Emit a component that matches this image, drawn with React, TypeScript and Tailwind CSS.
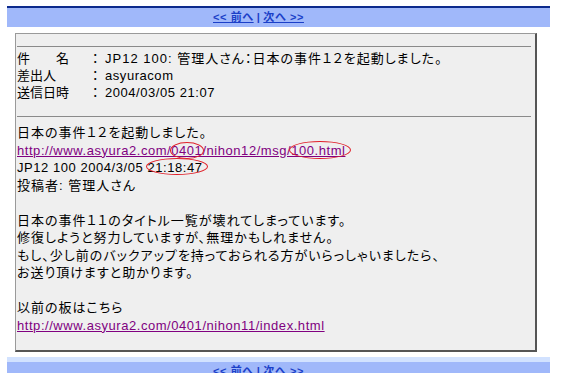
import React from 'react';

const jp = "font-['Liberation_Sans','Noto_Sans_CJK_JP',sans-serif]";

function NavBar({ clip = false }: { clip?: boolean }) {
  return (
    <div
      className={`ml-[7px] w-[543px] bg-[#a0b8fa] flex ${
        clip ? 'h-[11px] items-start overflow-hidden' : 'h-[19px] items-center'
      }`}
    >
      <div className={`ml-[206px] text-[11px] font-bold text-[#1b3fc8] tracking-[0.6px] ${jp} leading-[13px] ${clip ? 'pt-[3px]' : ''}`}>
        <a href="#" className="underline">&lt;&lt; 前へ</a>
        <span className="mx-[3px]">|</span>
        <a href="#" className="underline">次へ &gt;&gt;</a>
      </div>
    </div>
  );
}

function Ring({ className }: { className: string }) {
  return <span className={`absolute border border-[#e0202a] rounded-[50%] pointer-events-none ${className}`} />;
}

export default function App() {
  const rows: [string, string][] = [
    ['件　　名', 'JP12 100: 管理人さん：日本の事件１２を起動しました。'],
    ['差出人', 'asyuracom'],
    ['送信日時', '2004/03/05 21:07'],
  ];

  return (
    <div className={`w-[563px] h-[384px] bg-white overflow-hidden ${jp} text-[13px] text-black [font-feature-settings:'palt']`}>
      <div className="h-[6px]" />
      <div className="ml-[7px] w-[543px] h-[2px] bg-[#0c2a8c]" />
      <NavBar />

      <div className="mt-[6px] ml-[15px] w-[522px] h-[319px] bg-[#efefef] border-t border-l border-[#9a9a9a] border-r-2 border-b-2 border-r-[#555] border-b-[#555] px-[1px] tracking-[0.55px]">
        <div className="mt-[12px] mr-[3px] h-[1px] bg-[#8a8a8a]" />
        <div className="pt-[3px]">
          {rows.map(([k, v], i) => (
            <div key={k} className="flex h-[17px] leading-[17px]">
              <span className="w-[75px] whitespace-pre tracking-normal">{k}</span>
              <span className="w-[13px] tracking-normal">：</span>
              <span className={i === 0 ? 'tracking-[1px]' : ''}>{v}</span>
            </div>
          ))}
        </div>
        <div className="mt-[15px] mr-[3px] h-[1px] bg-[#8a8a8a]" />

        <div className="relative pt-[7px] leading-[17.5px]">
          <div className="tracking-[1px]">日本の事件１２を起動しました。</div>
          <div>
            <a href="#" className="text-[#800080] underline">
              http://www.asyura2.com/0401/nihon12/msg/100.html
            </a>
          </div>
          <div>JP12 100 2004/3/05 21:18:47</div>
          <div className="tracking-[1px]">投稿者: 管理人さん</div>
          <div className="h-[17.5px]" />
          <div className="tracking-[1px]">
            <div>日本の事件１１のタイトル一覧が壊れてしまっています。</div>
            <div>修復しようと努力していますが、無理かもしれません。</div>
            <div>もし、少し前のバックアップを持っておられる方がいらっしゃいましたら、</div>
            <div>お送り頂けますと助かります。</div>
            <div className="h-[17.5px]" />
            <div>以前の板はこちら</div>
          </div>
          <div>
            <a href="#" className="text-[#800080] underline">
              http://www.asyura2.com/0401/nihon11/index.html
            </a>
          </div>

          <Ring className="left-[153px] top-[25px] w-[34px] h-[17px]" />
          <Ring className="left-[272px] top-[24px] w-[62px] h-[18px]" />
          <Ring className="left-[129px] top-[41px] w-[62px] h-[17px]" />
        </div>
      </div>

      <div className="mt-[5px] ml-[7px] w-[543px] h-[5px] bg-[#d2e2ff]" />
      <NavBar clip />
    </div>
  );
}
